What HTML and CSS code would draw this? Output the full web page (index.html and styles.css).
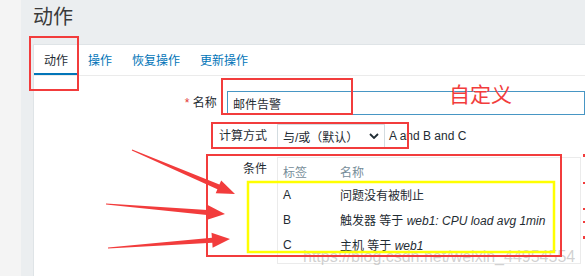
FILE: index.html
```html
<!DOCTYPE html>
<html lang="zh-CN">
<head>
  <meta charset="UTF-8">
  <title>动作</title>
  <link rel="stylesheet" href="styles.css">
</head>
<body>
  <div class="page">
    <div class="rail"></div>
    <div class="main">
      <h1>动作</h1>
      <div class="panel">
        <ul class="tabs">
          <li class="active">动作</li>
          <li>操作</li>
          <li>恢复操作</li>
          <li>更新操作</li>
        </ul>

        <div class="form">
          <!-- 名称 -->
          <div class="row">
            <label><span class="req">*</span> 名称</label>
            <input class="name" type="text" value="邮件告警">
          </div>

          <!-- 计算方式 -->
          <div class="row">
            <label>计算方式</label>
            <div class="select">
              <span>与/或（默认）</span>
              <svg class="chev" width="10" height="6" viewBox="0 0 10 6"><polyline points="1,1 5,5 9,1" fill="none" stroke="#1f2c33" stroke-width="1.8"/></svg>
            </div>
            <span class="expr">A and B and C</span>
          </div>

          <!-- 条件 -->
          <div class="row">
            <label>条件</label>
            <table class="conditions">
              <thead>
                <tr><th class="col-tag">标签</th><th>名称</th></tr>
              </thead>
              <tbody>
                <tr><td>A</td><td>问题没有被制止</td></tr>
                <tr><td>B</td><td>触发器 等于 <em>web1: CPU load avg 1min</em></td></tr>
                <tr><td>C</td><td>主机 等于 <em>web1</em></td></tr>
              </tbody>
            </table>
          </div>
        </div>
      </div>
    </div>
  </div>

  <div class="note">自定义</div>
  <div class="watermark">https://blog.csdn.net/weixin_44954554</div>

  <svg class="marks" width="585" height="276" viewBox="0 0 585 276">
    <g fill="none" stroke="#f23c3c" stroke-width="2">
      <rect x="30" y="37" width="48" height="53"/>
      <rect x="222" y="79" width="130" height="35"/>
      <rect x="212" y="123" width="196" height="25"/>
      <rect x="207" y="155" width="354" height="101"/>
    </g>
    <rect x="248" y="182" width="306" height="70" fill="none" stroke="#ffff00" stroke-width="2.5"/>
    <g fill="#f23c3c">
      <polygon points="132.2,149.5 219.4,184.6 221.2,180.5 235,194 215.7,193.3 217.4,189.2 131.8,150.5"/>
      <polygon points="106,203.5 207.3,210 207.7,205 225,214 206.5,220 206.9,215 106,204.5"/>
      <polygon points="108,247.5 211.9,237.8 211.5,232.8 230,239 212.6,247.8 212.3,242.8 108,248.5"/>
      <rect x="583" y="154" width="2" height="3"/>
      <rect x="583" y="182" width="2" height="2"/>
      <rect x="583" y="208" width="2" height="2"/>
      <rect x="583" y="221" width="2" height="2"/>
      <rect x="583" y="236" width="2" height="3"/>
    </g>
  </svg>
</body>
</html>
```

FILE: styles.css
```css
body {
  margin: 0;
  width: 585px;
  height: 276px;
  overflow: hidden;
  font-family: 'Liberation Sans', 'Noto Sans CJK SC', sans-serif;
  font-size: 12px;
  color: #1f2c33;
}
.page {
  display: flex;
  height: 276px;
}
.rail {
  width: 21px;
  background-color: #f4f4f4;
}
.main {
  flex: 1;
  display: flex;
  flex-direction: column;
  padding-left: 12px;
  background-color: #ebeef0;
  overflow: hidden;
}
h1 {
  margin: 0;
  height: 44px;
  box-sizing: border-box;
  padding-top: 4px;
  font-size: 20px;
  font-weight: normal;
  line-height: 26px;
  color: #3a3a3a;
}
.panel {
  flex: 1;
  background: white;
  border-top: 1px solid #dfe4e7;
  border-left: 1px solid #dfe4e7;
}

/* tabs */
.tabs {
  display: flex;
  margin: 0;
  padding: 0;
  list-style: none;
  border-bottom: 1px solid #ebebeb;
}
.tabs li {
  padding: 4px 10px 0;
  line-height: 24px;
  border-bottom: 2px solid transparent;
  color: #0275b8;
}
.tabs li.active {
  color: #1f2c33;
  border-bottom-color: #0275b8;
}

/* form */
.form {
  padding-top: 15px;
}
.row {
  display: flex;
  align-items: flex-start;
  margin-bottom: 9px;
}
.row label {
  width: 233px;
  margin-right: 10px;
  text-align: right;
  line-height: 24px;
}
.req {
  color: #e33734;
}
.name {
  width: 453px;
  height: 24px;
  box-sizing: border-box;
  padding: 0 5px;
  border: 1px solid #4796c4;
  font: inherit;
  color: #1f2c33;
  outline: none;
}
.select {
  display: flex;
  align-items: center;
  justify-content: space-between;
  width: 108px;
  height: 24px;
  box-sizing: border-box;
  padding: 0 5px;
  border: 1px solid #d3dce0;
}
.expr {
  margin-left: 4px;
  line-height: 24px;
}

/* conditions table */
.conditions {
  width: 304px;
  table-layout: fixed;
  border: 1px solid #ebebeb;
  border-spacing: 0;
  padding: 2px 0 6px;
}
.conditions th {
  height: 22px;
  padding: 0 5px;
  text-align: left;
  font-weight: normal;
  color: #768d99;
}
.conditions .col-tag {
  width: 47px;
}
.conditions td {
  height: 25px;
  padding: 0 5px;
  white-space: nowrap;
}
.conditions em {
  font-style: italic;
}

/* annotations */
.note {
  position: absolute;
  left: 449px;
  top: 81px;
  font-family: 'Noto Sans CJK SC', sans-serif;
  font-size: 21px;
  line-height: 24px;
  color: #f23c3c;
}
.watermark {
  position: absolute;
  left: 303px;
  top: 249px;
  font-size: 16px;
  line-height: 16px;
  color: rgba(170, 170, 170, 0.55);
}
.marks {
  position: absolute;
  top: 0;
  left: 0;
  pointer-events: none;
}
```
